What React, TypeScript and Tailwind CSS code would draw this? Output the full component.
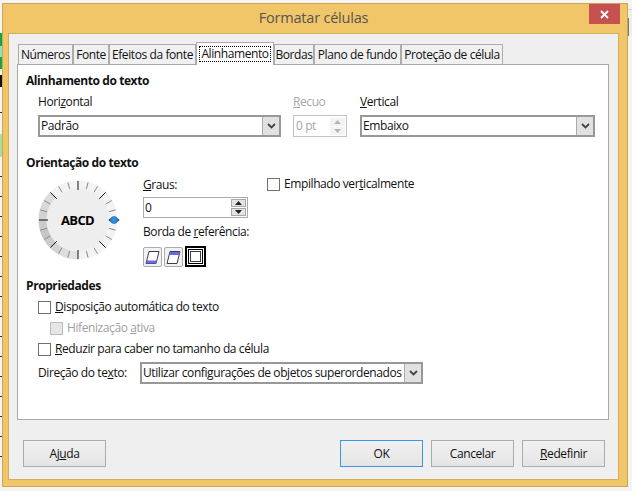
import React from 'react';

const ChevronBtn = () => (
  <div className="w-[17px] h-full bg-[#e1e1e1] flex items-center justify-center border-l border-[#ababab] shrink-0">
    <svg width="9" height="6" viewBox="0 0 9 6">
      <path d="M1 1l3.5 3.5L8 1" fill="none" stroke="#444" strokeWidth="1.8" />
    </svg>
  </div>
);

const Select = ({ value, className }: { value: string; className: string }) => (
  <div className={`${className} h-[22px] flex items-center bg-white border-2 border-[#989898] box-border`}>
    <div className="flex-1 pl-[1px] whitespace-nowrap overflow-hidden">{value}</div>
    <ChevronBtn />
  </div>
);

const Check = ({ disabled }: { disabled?: boolean }) => (
  <div className={`w-[13px] h-[13px] border shrink-0 ${disabled ? 'bg-[#e6e6e6] border-[#bcbcbc]' : 'bg-white border-[#707070]'}`} />
);

const Spinner = ({ dim }: { dim?: boolean }) => {
  const c = dim ? '#b5b5b5' : '#222';
  return (
    <div className="w-[15px] flex flex-col gap-[1px] py-[1px] mr-[1px]">
      <div className={`h-[8px] flex items-center justify-center ${dim ? 'bg-[#f3f3f3]' : 'bg-[#e4e4e4] border border-[#a8a8a8]'}`}>
        <svg width="7" height="4" viewBox="0 0 7 4"><path d="M3.5 0L7 4H0z" fill={c} /></svg>
      </div>
      <div className={`h-[8px] flex items-center justify-center ${dim ? 'bg-[#f3f3f3]' : 'bg-[#e4e4e4] border border-[#a8a8a8]'}`}>
        <svg width="7" height="4" viewBox="0 0 7 4"><path d="M3.5 4L7 0H0z" fill={c} /></svg>
      </div>
    </div>
  );
};

const polar = (r: number, deg: number) => {
  const a = (deg * Math.PI) / 180;
  return [44 + r * Math.cos(a), 44 - r * Math.sin(a)];
};

// one piece of the ring round the dial, angles counter-clockwise from 3 o'clock
const arcPath = (from: number, to: number) => {
  const [x1, y1] = polar(39.5, from);
  const [x2, y2] = polar(39.5, to);
  const [x3, y3] = polar(31.5, to);
  const [x4, y4] = polar(31.5, from);
  return `M${x1} ${y1}A39.5 39.5 0 0 0 ${x2} ${y2}L${x3} ${y3}A31.5 31.5 0 0 1 ${x4} ${y4}Z`;
};

const ringShades: [number, string][] = [
  [135, '#dcdcdc'], [150, '#d8d8d8'], [165, '#d2d2d2'], [180, '#cbcbcb'], [195, '#c6c6c6'], [210, '#cbcbcb'],
  [225, '#d4d4d4'], [240, '#dcdcdc'], [255, '#e2e2e2'],
];

const Dial = () => {
  const ticks = Array.from({ length: 24 }, (_, i) => i * 15);
  return (
    <div className="relative w-[88px] h-[88px]">
      <svg width="88" height="88" viewBox="0 0 88 88">
        <circle cx="44" cy="44" r="39.5" fill="#f3f3f3" />
        <circle cx="44" cy="44" r="31.5" fill="#eeeeee" />
        {ringShades.map(([a, c]) => (
          <path key={a} d={arcPath(a, a + 15)} fill={c} />
        ))}
        {ticks.map(a => {
          const major = a % 45 === 0;
          if (a === 0) return null;
          const [x1, y1] = polar(major ? 30 : 32, a);
          const [x2, y2] = polar(39, a);
          return <line key={a} x1={x1} y1={y1} x2={x2} y2={y2} stroke={major ? '#111' : '#8a8a8a'} strokeWidth="1" />;
        })}
        <circle cx="80" cy="44" r="3.5" fill="#2f8fe6" stroke="#0b3f73" strokeWidth="0.5" />
        <path d="M74.5 44l2-2v4zM85.5 44l-2-2v4z" fill="#0b3f73" />
      </svg>
      <div className="absolute left-0 right-[1px] top-0 h-[88px] flex items-center justify-center font-bold text-[13px] tracking-[-0.6px] text-black">ABCD</div>
    </div>
  );
};

const BorderBtn = ({ fill }: { fill: 'bottom' | 'top' }) => (
  <div className="w-[19px] h-[20px] bg-[#f2f2f2] border border-[#ababab] rounded-[2px] flex items-center justify-center">
    <svg width="15" height="13" viewBox="0 0 15 13">
      <path d="M4 .5h10l-3 12H1z" fill="#fff" stroke="#3c3c50" />
      {fill === 'bottom' ? <path d="M2 9.5h10l-1 3H1z" fill="#6868e8" /> : <path d="M4 1h10l-.8 3H3.2z" fill="#6868e8" />}
    </svg>
  </div>
);

const DlgButton = ({ children, primary, className = '' }: { children: React.ReactNode; primary?: boolean; className?: string }) => (
  <div className={`w-[83px] h-[27px] flex items-center justify-center border bg-gradient-to-b from-[#f0f0f0] to-[#e5e5e5] ${primary ? 'border-[#3c95e8]' : 'border-[#acacac]'} ${className}`}>
    {children}
  </div>
);

const tabs: [string, string][] = [
  ['Números', 'w-[55px]'],
  ['Fonte', 'w-[36px]'],
  ['Efeitos da fonte', 'w-[87px]'],
];
const tabsAfter: [string, string][] = [
  ['Bordas', 'w-[40px]'],
  ['Plano de fundo', 'w-[87px]'],
  ['Proteção de célula', 'w-[102px]'],
];

const Tab = ({ label, w }: { label: string; w: string }) => (
  <div className={`${w} h-[20px] mt-[2px] bg-[#f0f0f0] border border-b-0 border-[#acacac] flex items-center justify-center whitespace-nowrap`}>
    {label}
  </div>
);

// bits of the spreadsheet window that show behind the dialog
const LeftEdge = () => (
  <div className="absolute left-0 top-0 w-[2px] h-[491px] flex flex-col">
    <div className="h-[33px]" />
    <div className="h-[13px] bg-[#10a54a]" />
    <div className="h-[11px] bg-[#8fdcd0]" />
    <div className="h-[12px] bg-[#10a54a]" />
    <div className="h-[6px]" />
    <div className="h-[12px] bg-[#111]" />
    <div className="h-[25px]" />
    <div className="h-[1px] bg-[#333]" />
    <div className="h-[21px]" />
    <div className="h-[23px] bg-[#a5e0a0]" />
    <div className="flex flex-col gap-[19px] mt-[19px]">
      {Array.from({ length: 15 }, (_, i) => (
        <div key={i} className="h-[1px] bg-[#333]" />
      ))}
    </div>
  </div>
);

const RightEdge = () => (
  <div className="absolute left-[628px] top-[9px] w-[4px] h-[27px] bg-[#eeeeee] border-t border-[#d0d0d0]">
    <div className="w-[1px] h-[18px] mt-[8px] bg-[#777]" />
  </div>
);

const App: React.FC = () => {
  return (
    <div className="relative w-[632px] h-[491px] overflow-hidden bg-[#f4f4f4] pt-[3px] pl-[2px] text-[12px] leading-[16px] text-[#111] [font-family:'Open_Sans',sans-serif] tracking-[-0.41px]">
      <LeftEdge />
      <RightEdge />
      <div className="w-[626px] h-[484px] bg-[#f0c669] border border-[#cda64f] px-[5px] flex flex-col">
        {/* title bar */}
        <div className="h-[29px] relative flex items-center justify-center shrink-0">
          <span className="text-[14.5px] tracking-[-0.2px] text-[#555] mb-[1px] mr-[3px]">Formatar células</span>
          <div className="absolute right-[2px] top-0 w-[31px] h-[20px] bg-[#c75050] flex items-center justify-center">
            <svg width="9" height="9" viewBox="0 0 9 9"><path d="M1 1l7 7M8 1l-7 7" stroke="#fff" strokeWidth="1.8" /></svg>
          </div>
        </div>

        <div className="w-[611px] h-[447px] bg-[#efefef] border border-[#d3ad58] pl-[8px] pt-[8px] flex flex-col">
          {/* tabs */}
          <div className="flex h-[23px] pl-[1px] relative z-10">
            {tabs.map(([l, w]) => <Tab key={l} label={l} w={w} />)}
            <div className="w-[78px] h-[23px] bg-white border border-b-0 border-[#acacac] flex items-center justify-center">
              <span className="border border-dotted border-black leading-[14px] px-[1px] whitespace-nowrap">Alinhamento</span>
            </div>
            {tabsAfter.map(([l, w]) => <Tab key={l} label={l} w={w} />)}
          </div>

          {/* panel */}
          <div className="w-[592px] h-[356px] -mt-[1px] bg-white border border-[#a8a8a8] pl-[8px] flex flex-col">
            <h3 className="font-bold mt-[8px] h-[16px]">Alinhamento do texto</h3>

            <div className="flex mt-[5px] pl-[12px]">
              <div className="w-[255px]">
                <div className="h-[16px] mb-[5px]">Hori<u>z</u>ontal</div>
                <Select value="Padrão" className="w-[243px]" />
              </div>
              <div className="w-[67px] text-[#a8a8a8]">
                <div className="h-[16px] mb-[5px]"><u>R</u>ecuo</div>
                <div className="w-[54px] h-[22px] border border-[#c4c4c4] flex items-center pl-[2px]">
                  <div className="flex-1">0 pt</div>
                  <Spinner dim />
                </div>
              </div>
              <div>
                <div className="h-[16px] mb-[5px]"><u>V</u>ertical</div>
                <Select value="Embaixo" className="w-[235px]" />
              </div>
            </div>

            <h3 className="font-bold mt-[18px] h-[16px]">Orientação do texto</h3>

            <div className="flex mt-[2px]">
              <div className="w-[117px] pl-[8px] pt-[3px] h-[100px]"><Dial /></div>
              <div className="w-[124px]">
                <div className="h-[16px] mt-[4px] mb-[4px]"><u>G</u>raus:</div>
                <div className="w-[105px] h-[21px] border border-[#ababab] flex items-center pl-[1px]">
                  <div className="flex-1">0</div>
                  <Spinner />
                </div>
                <div className="h-[16px] mt-[6px] whitespace-nowrap">Borda de <u>r</u>eferência:</div>
                <div className="flex gap-[2px] mt-[7px]">
                  <BorderBtn fill="bottom" />
                  <BorderBtn fill="top" />
                  <div className="w-[21px] h-[21px] border-2 border-black flex items-center justify-center -mt-[1px]">
                    <div className="w-[15px] h-[15px] bg-white border border-black flex items-center justify-center">
                      <div className="w-[11px] h-[11px] border border-[#3c3c50]" />
                    </div>
                  </div>
                </div>
              </div>
              <div className="flex items-center gap-[4px] h-[16px] mt-[3px]">
                <Check />
                <span>Empilhado ver<u>t</u>icalmente</span>
              </div>
            </div>

            <h3 className="font-bold mt-[5px] h-[16px]">Propriedades</h3>

            <div className="flex items-center gap-[4px] h-[16px] mt-[5px] pl-[12px]">
              <Check />
              <span><u>D</u>isposição automática do texto</span>
            </div>
            <div className="flex items-center gap-[4px] h-[16px] mt-[5px] pl-[24px] text-[#a0a0a0]">
              <Check disabled />
              <span>Hifenização <u>a</u>tiva</span>
            </div>
            <div className="flex items-center gap-[4px] h-[16px] mt-[5px] pl-[12px]">
              <Check />
              <span><u>R</u>eduzir para caber no tamanho da célula</span>
            </div>
            <div className="flex items-center mt-[5px] pl-[12px] h-[22px]">
              <div className="w-[102px]">Direção do te<u>x</u>to:</div>
              <Select value="Utilizar configurações de objetos superordenados" className="w-[283px]" />
            </div>
          </div>

          {/* dialog buttons */}
          <div className="flex mt-[20px] pl-[6px]">
            <DlgButton><span>Aj<u>u</u>da</span></DlgButton>
            <DlgButton primary className="ml-[234px]">OK</DlgButton>
            <DlgButton className="ml-[8px]">Cancelar</DlgButton>
            <DlgButton className="ml-[8px]"><span><u>R</u>edefinir</span></DlgButton>
          </div>
        </div>
      </div>
    </div>
  );
};

export default App;
